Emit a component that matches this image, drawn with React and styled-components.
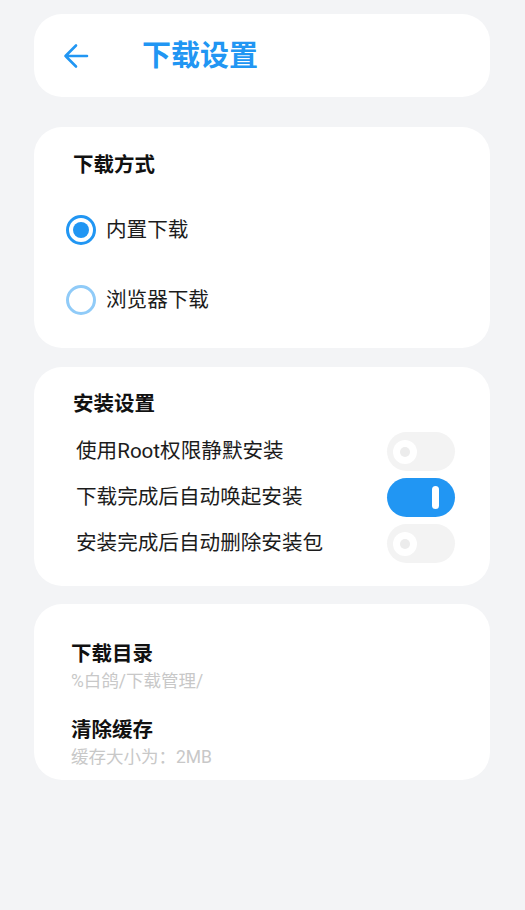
import React, { useState } from "react";
import styled, { createGlobalStyle } from "styled-components";

const Global = createGlobalStyle`
  html, body { margin: 0; padding: 0; background: #f3f4f6; }
  body { font-family: Roboto, "Noto Sans CJK SC", sans-serif; color: #1c1c1c; }
  * { box-sizing: border-box; }
`;

const Page = styled.div`
  display: flex;
  flex-direction: column;
  padding: 14px 35px 0 34px;
  min-height: 910px;
`;

const Card = styled.section`
  background: #ffffff;
  border-radius: 28px;
  display: flex;
  flex-direction: column;
  margin-top: ${(p) => p.$mt || 0}px;
  padding: ${(p) => p.$pad};
`;

const Header = styled(Card)`
  flex-direction: row;
  align-items: center;
  height: 83px;
  padding: 0 0 0 29px;
`;

const BackButton = styled.button`
  border: 0;
  background: none;
  padding: 0;
  display: flex;
  align-items: center;
  cursor: pointer;
`;

const Title = styled.h1`
  margin: 0 0 0 53px;
  font-size: 29px;
  line-height: 40px;
  font-weight: 700;
  color: #2196f3;
`;

const SectionTitle = styled.h2`
  margin: 0 0 ${(p) => p.$mb || 0}px ${(p) => p.$ml || 0}px;
  font-size: 20.5px;
  line-height: 28px;
  font-weight: 700;
  color: #111;
`;

const RadioList = styled.div`
  display: flex;
  flex-direction: column;
  gap: 20px;
  margin-top: 26px;
`;

const RadioRow = styled.label`
  display: flex;
  align-items: center;
  gap: 10px;
  height: 50px;
  cursor: pointer;
`;

const RadioCircle = styled.span`
  width: 30px;
  height: 30px;
  border-radius: 50%;
  border: 3px solid ${(p) => (p.$checked ? "#2196f3" : "#90cbf8")};
  display: flex;
  align-items: center;
  justify-content: center;
  &::after {
    content: "";
    width: 16px;
    height: 16px;
    border-radius: 50%;
    background: ${(p) => (p.$checked ? "#2196f3" : "transparent")};
  }
`;

const OptionText = styled.span`
  font-size: 20.6px;
  line-height: 28px;
  color: #1c1c1c;
`;

const SwitchRow = styled.div`
  display: flex;
  align-items: center;
  justify-content: space-between;
  height: 46px;
  padding-left: 3px;
`;

const SwitchTrack = styled.button`
  position: relative;
  width: 68px;
  height: 39px;
  border-radius: 20px;
  border: 0;
  padding: 0;
  cursor: pointer;
  background: ${(p) => (p.$on ? "#2196f3" : "#f3f3f3")};
`;

const OffThumb = styled.span`
  position: absolute;
  left: 6px;
  top: 8px;
  width: 24px;
  height: 24px;
  border-radius: 50%;
  background: #fff;
  display: flex;
  align-items: center;
  justify-content: center;
  &::after {
    content: "";
    width: 10px;
    height: 10px;
    border-radius: 50%;
    background: #ececec;
  }
`;

const OnBar = styled.span`
  position: absolute;
  right: 16px;
  top: 8px;
  width: 7px;
  height: 23px;
  border-radius: 4px;
  background: #fff;
`;

const Item = styled.div`
  display: flex;
  flex-direction: column;
  margin-top: ${(p) => p.$mt || 0}px;
`;

const ItemTitle = styled.div`
  font-size: 20.5px;
  line-height: 28px;
  font-weight: 700;
  color: #111;
`;

const ItemSub = styled.div`
  font-size: 17.5px;
  line-height: 26px;
  color: #c8c8c8;
`;

function Switch({ on, onToggle }) {
  return (
    <SwitchTrack $on={on} onClick={onToggle} aria-pressed={on}>
      {on ? <OnBar /> : <OffThumb />}
    </SwitchTrack>
  );
}

export default function App() {
  const [mode, setMode] = useState("builtin");
  const [sw, setSw] = useState([false, true, false]);
  const toggle = (i) => setSw((s) => s.map((v, j) => (j === i ? !v : v)));
  const rows = ["使用Root权限静默安装", "下载完成后自动唤起安装", "安装完成后自动删除安装包"];

  return (
    <>
      <Global />
      <Page>
        <Header as="header">
          <BackButton aria-label="返回">
            <svg width="26" height="26" viewBox="0 0 26 26" fill="none">
              <path
                d="M24 13H2.5M13 2.5L2.5 13L13 23.5"
                stroke="#2196f3"
                strokeWidth="2.6"
                strokeLinecap="round"
                strokeLinejoin="round"
              />
            </svg>
          </BackButton>
          <Title>下载设置</Title>
        </Header>

        <Card $mt={30} $pad="24px 0 23px 32px">
          <SectionTitle $ml={7}>下载方式</SectionTitle>
          <RadioList>
            <RadioRow onClick={() => setMode("builtin")}>
              <RadioCircle $checked={mode === "builtin"} />
              <OptionText>内置下载</OptionText>
            </RadioRow>
            <RadioRow onClick={() => setMode("browser")}>
              <RadioCircle $checked={mode === "browser"} />
              <OptionText>浏览器下载</OptionText>
            </RadioRow>
          </RadioList>
        </Card>

        <Card $mt={19} $pad="23px 35px 20px 39px">
          <SectionTitle $mb={10}>安装设置</SectionTitle>
          {rows.map((r, i) => (
            <SwitchRow key={r}>
              <OptionText>{r}</OptionText>
              <Switch on={sw[i]} onToggle={() => toggle(i)} />
            </SwitchRow>
          ))}
        </Card>

        <Card $mt={18} $pad="36px 0 10px 37px">
          <Item>
            <ItemTitle>下载目录</ItemTitle>
            <ItemSub>%白鸽/下载管理/</ItemSub>
          </Item>
          <Item $mt={22}>
            <ItemTitle>清除缓存</ItemTitle>
            <ItemSub>缓存大小为：2MB</ItemSub>
          </Item>
        </Card>
      </Page>
    </>
  );
}
